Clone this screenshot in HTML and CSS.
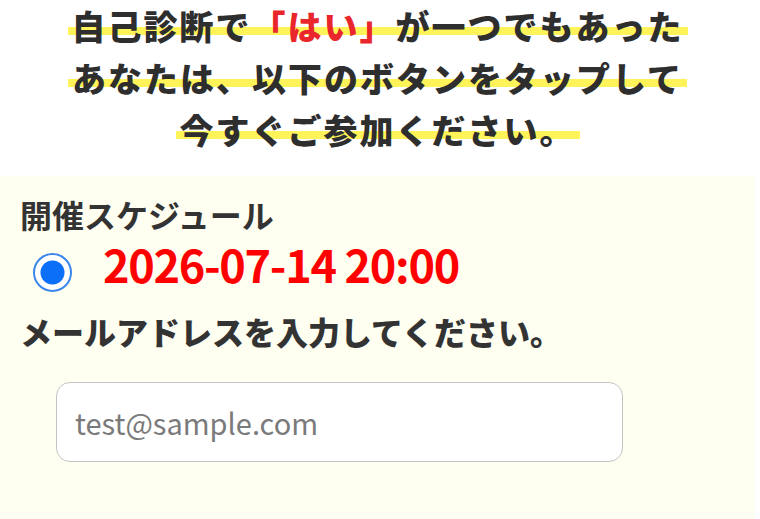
FILE: index.html
```html
<!DOCTYPE html>
<html lang="ja">
<head>
<meta charset="utf-8">
<link rel="stylesheet" href="styles.css">
</head>
<body>
<div class="page">
  <h1 class="lead"><span class="mark">自己診断で<span class="red">「はい」</span>が一つでもあった</span><br><span class="mark">あなたは、以下のボタンをタップして</span><br><span class="mark">今すぐご参加ください。</span></h1>
  <section class="panel">
    <h2 class="title">開催スケジュール</h2>
    <label class="option">
      <input class="radio" type="radio" name="date" checked>
      <span class="date">2026-07-14 20:00</span>
    </label>
    <p class="label">メールアドレスを入力してください。</p>
    <input class="email" type="email" placeholder="test@sample.com">
  </section>
</div>
</body>
</html>
```
FILE: styles.css
```css
html, body {
  margin: 0;
  padding: 0;
  background: #ffffff;
}
body {
  font-family: "Noto Sans CJK JP", "Noto Sans", sans-serif;
  color: #333333;
}
.page {
  width: 755px;
}
.lead {
  margin: 0;
  text-align: center;
  font-size: 34px;
  line-height: 52px;
  font-weight: 900;
  letter-spacing: 2px;
  color: #2e2e2e;
}
.mark {
  background: linear-gradient(to bottom, transparent 54%, #fff35a 54%, #fff35a 70%, transparent 70%);
  padding: 0 4px;
}
.red {
  color: #e8262b;
}
.panel {
  margin-top: 20px;
  background: #fefef1;
  padding: 18px 20px 60px 20px;
}
.title {
  margin: 0;
  font-size: 32px;
  line-height: 40px;
  font-weight: 700;
  color: #333333;
}
.option {
  display: flex;
  align-items: center;
  height: 56px;
  margin-top: 10px;
}
.radio {
  appearance: none;
  -webkit-appearance: none;
  margin: 0 0 0 13px;
  width: 39px;
  height: 39px;
  border-radius: 50%;
  border: 2px solid #3b86ea;
  background: radial-gradient(circle, #0b6ff7 0 11.5px, #ffffff 12.5px);
  box-sizing: border-box;
  flex: none;
}
.date {
  margin-left: 31px;
  margin-bottom: 16px;
  font-size: 45px;
  letter-spacing: -1.3px;
  font-weight: 700;
  color: #ff0000;
  line-height: 56px;
}
.label {
  margin: 11px 0 0 0;
  font-size: 32px;
  line-height: 40px;
  font-weight: 900;
  color: #333333;
}
.email {
  display: block;
  margin: 31px 0 0 36px;
  width: 567px;
  height: 80px;
  box-sizing: border-box;
  border: 1.5px solid #c4c4c4;
  border-radius: 14px;
  background: #ffffff;
  padding: 0 18px;
  font-family: "Noto Sans CJK JP", "Noto Sans", sans-serif;
  font-size: 29px;
  color: #333333;
}
.email::placeholder {
  color: #7a7a7a;
}
```
